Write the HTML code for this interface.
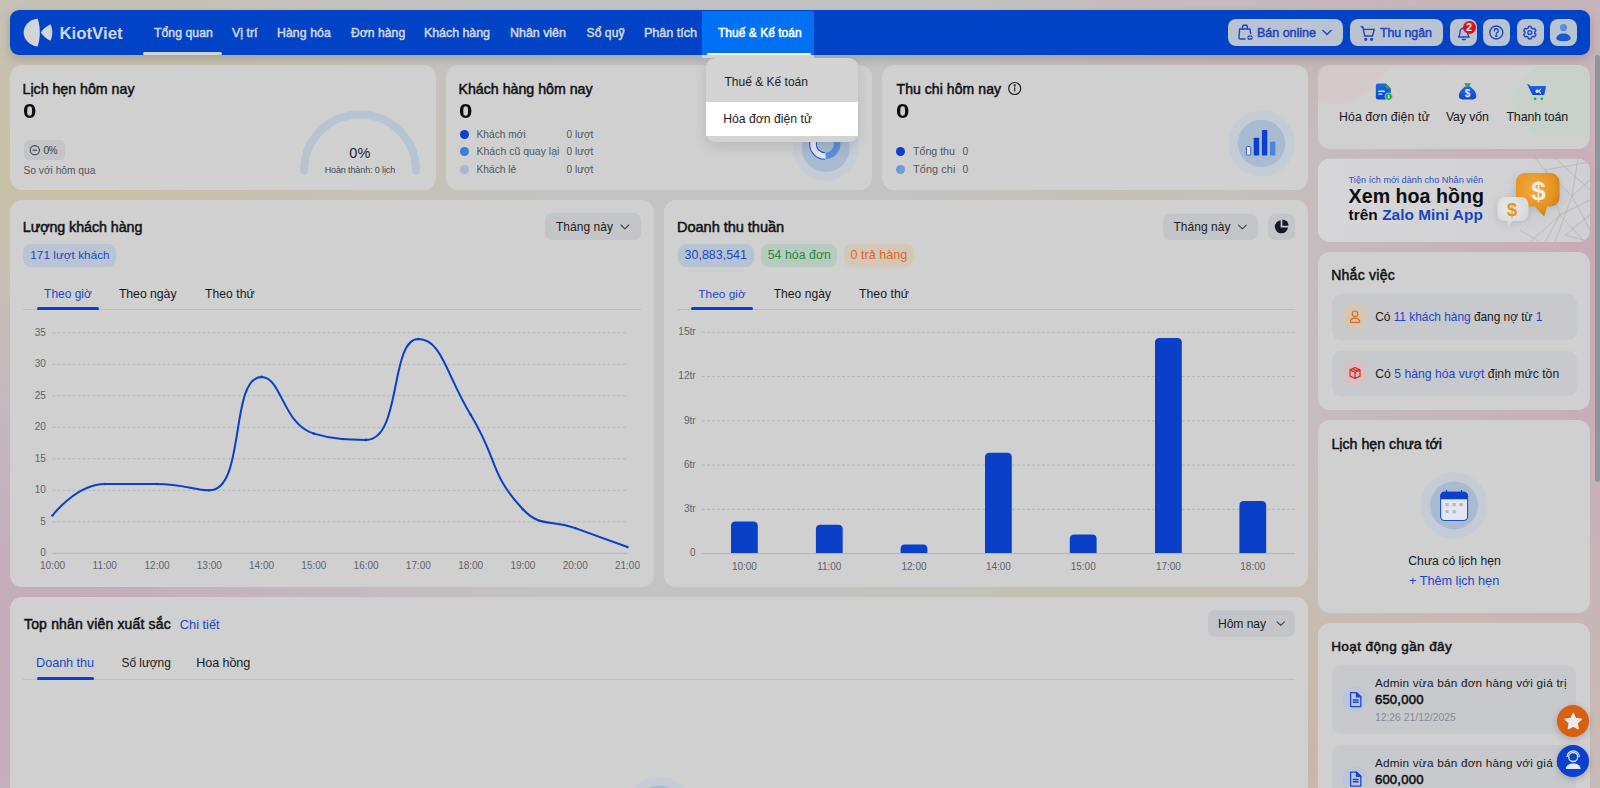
<!DOCTYPE html>
<html><head><meta charset="utf-8"><title>KiotViet</title>
<style>
html,body{margin:0;padding:0;width:1600px;height:788px;overflow:hidden;}
body{font-family:"Liberation Sans",sans-serif;background:#c3c3c3;}
#page{position:absolute;left:0;top:0;width:1600px;height:788px;overflow:hidden;
background:
 radial-gradient(ellipse 380px 110px at 1260px 40px, rgba(198,180,178,0.85), rgba(198,180,178,0) 100%),
 radial-gradient(ellipse 300px 200px at 1080px 600px, rgba(194,194,172,0.85), rgba(194,194,172,0) 100%),
 radial-gradient(ellipse 240px 130px at 1120px 195px, rgba(198,190,172,0.7), rgba(198,190,172,0) 100%),
 radial-gradient(ellipse 430px 320px at 1320px 760px, rgba(204,182,166,0.95), rgba(204,182,166,0) 100%),
 radial-gradient(ellipse 420px 650px at 1620px 300px, rgba(202,168,180,0.98), rgba(202,168,180,0) 100%),
 radial-gradient(ellipse 520px 440px at 40px 660px, rgba(198,168,186,1), rgba(198,168,186,0) 100%),
 radial-gradient(ellipse 520px 270px at 80px 160px, rgba(202,190,160,0.95), rgba(202,190,160,0) 100%),
 #c3c3c4;}
.t{position:absolute;white-space:nowrap;line-height:1;}
.r{position:absolute;}
.card{position:absolute;background:#d2d2d2;border-radius:12px;}
svg{position:absolute;overflow:visible;}

</style></head><body><div id="page">
<div class="r" style="left:10.00px;top:65.00px;width:426.00px;height:124.60px;background:#d0d0d0;border-radius:12px;"></div>
<div class="r" style="left:446.00px;top:65.00px;width:426.00px;height:124.60px;background:#d0d0d0;border-radius:12px;"></div>
<div class="r" style="left:882.00px;top:65.00px;width:426.00px;height:124.60px;background:#d0d0d0;border-radius:12px;"></div>
<div class="r" style="left:10.00px;top:200.00px;width:644.00px;height:387.00px;background:#d0d0d0;border-radius:12px;"></div>
<div class="r" style="left:664.00px;top:200.00px;width:644.00px;height:387.00px;background:#d0d0d0;border-radius:12px;"></div>
<div class="r" style="left:10.00px;top:597.00px;width:1298.00px;height:303.00px;background:#d0d0d0;border-radius:12px;"></div>
<div class="r" style="left:1318.00px;top:65.00px;width:272.00px;height:83.50px;background:#d0d0d0;border-radius:12px;"></div>
<div class="r" style="left:1318.00px;top:158.50px;width:272.00px;height:83.30px;background:#d0d0d0;border-radius:12px;"></div>
<div class="r" style="left:1318.00px;top:252.00px;width:272.00px;height:157.60px;background:#d0d0d0;border-radius:12px;"></div>
<div class="r" style="left:1318.00px;top:420.00px;width:272.00px;height:192.60px;background:#d0d0d0;border-radius:12px;"></div>
<div class="r" style="left:1318.00px;top:623.00px;width:272.00px;height:277.00px;background:#d0d0d0;border-radius:12px;"></div>
<div class="r" style="left:10.00px;top:10.00px;width:1580.00px;height:45.00px;background:#0043c7;border-radius:9px;box-shadow:0 4px 10px rgba(0,0,0,0.16);"></div>
<svg style="left:0;top:0" width="1600" height="60">
<path d="M37.6 18.4 C29 19.5 23.6 26 23.6 32.5 C23.6 39 29 45.5 37.6 46.6 C39.2 42 39.8 37 39.8 32.5 C39.8 28 39.2 23 37.6 18.4 Z" fill="#d4d5da"/>
<path d="M50.5 24.2 C51.8 27 52.3 29.8 52.3 32.5 C52.3 35.2 51.8 38 50.5 40.8 C46.5 38.8 43 36 40.8 32.5 C43 29 46.5 26.2 50.5 24.2 Z" fill="#d4d5da"/>
</svg>
<span id="t0" class="t" style="left:59.40px;top:25.60px;font-size:16.87px;color:#d2d5dd;font-weight:700;letter-spacing:-0.025px;">KiotViet</span>
<span id="t1" class="t" style="left:154.00px;top:27.01px;font-size:12.19px;color:#d2d5dd;font-weight:400;-webkit-text-stroke-width:0.5px;letter-spacing:0.063px;">Tổng quan</span>
<span id="t2" class="t" style="left:232.00px;top:27.01px;font-size:12.48px;color:#d2d5dd;font-weight:400;-webkit-text-stroke-width:0.5px;letter-spacing:-0.033px;">Vị trí</span>
<span id="t3" class="t" style="left:277.00px;top:27.00px;font-size:12.29px;color:#d2d5dd;font-weight:400;-webkit-text-stroke-width:0.5px;letter-spacing:0.081px;">Hàng hóa</span>
<span id="t4" class="t" style="left:351.00px;top:27.01px;font-size:12.10px;color:#d2d5dd;font-weight:400;-webkit-text-stroke-width:0.5px;letter-spacing:0.067px;">Đơn hàng</span>
<span id="t5" class="t" style="left:424.00px;top:27.01px;font-size:12.41px;color:#d2d5dd;font-weight:400;-webkit-text-stroke-width:0.5px;letter-spacing:-0.036px;">Khách hàng</span>
<span id="t6" class="t" style="left:510.00px;top:27.02px;font-size:12.49px;color:#d2d5dd;font-weight:400;-webkit-text-stroke-width:0.5px;letter-spacing:-0.034px;">Nhân viên</span>
<span id="t7" class="t" style="left:586.60px;top:27.00px;font-size:12.01px;color:#d2d5dd;font-weight:400;-webkit-text-stroke-width:0.5px;letter-spacing:0.088px;">Sổ quỹ</span>
<span id="t8" class="t" style="left:644.00px;top:27.00px;font-size:12.60px;color:#d2d5dd;font-weight:400;-webkit-text-stroke-width:0.5px;letter-spacing:-0.026px;">Phân tích</span>
<div class="r" style="left:143.00px;top:52.20px;width:79.00px;height:2.80px;background:#d0d3da;border-radius:2px;"></div>
<div class="r" style="left:702.40px;top:10.80px;width:111.40px;height:44.20px;background:#0070f4;border-radius:0px;"></div>
<div class="r" style="left:702.40px;top:55.00px;width:111.40px;height:3.40px;background:#d8d8d9;border-radius:0px;"></div>
<div class="r" style="left:707.00px;top:52.50px;width:104.00px;height:2.50px;background:#ffffff;border-radius:2px;"></div>
<span id="t9" class="t" style="left:718.00px;top:27.01px;font-size:11.99px;color:#ffffff;font-weight:400;-webkit-text-stroke-width:0.5px;letter-spacing:0.029px;">Thuế &amp; Kế toán</span>
<div class="r" style="left:1228.00px;top:19.00px;width:115.00px;height:27.00px;background:#bac3d1;border-radius:8px;"></div>
<div class="r" style="left:1350.00px;top:19.00px;width:93.00px;height:27.00px;background:#bac3d1;border-radius:8px;"></div>
<div class="r" style="left:1450.00px;top:19.00px;width:27.00px;height:27.00px;background:#bac3d1;border-radius:8px;"></div>
<div class="r" style="left:1483.00px;top:19.00px;width:27.00px;height:27.00px;background:#bac3d1;border-radius:8px;"></div>
<div class="r" style="left:1516.50px;top:19.00px;width:27.00px;height:27.00px;background:#bac3d1;border-radius:8px;"></div>
<div class="r" style="left:1550.00px;top:19.00px;width:27.00px;height:27.00px;background:#bac3d1;border-radius:8px;"></div>
<span id="t10" class="t" style="left:1257.00px;top:27.01px;font-size:12.54px;color:#1f45c4;font-weight:400;-webkit-text-stroke-width:0.5px;letter-spacing:-0.028px;">Bán online</span>
<span id="t11" class="t" style="left:1380.00px;top:27.01px;font-size:12.37px;color:#1f45c4;font-weight:400;-webkit-text-stroke-width:0.5px;letter-spacing:-0.050px;">Thu ngân</span>
<svg style="left:0;top:0" width="1600" height="60" fill="none" stroke="#1f45c4" stroke-width="1.4" stroke-linecap="round" stroke-linejoin="round">
<!-- bag icon -->
<path d="M1240 29 h10 l0.6 4.5 M1239.6 29 l-0.6 9 a1 1 0 0 0 1 1 h5"/>
<path d="M1242.5 29 v-1.5 a2.5 2.5 0 0 1 5 0 v1.5"/>
<circle cx="1250" cy="37.5" r="2.6" fill="#1f45c4" stroke="none"/>
<path d="M1250 35.6 v3.8 M1248.2 37.5 h3.6" stroke="#bac3d1" stroke-width="0.8"/>
<!-- chevron -->
<path d="M1323 30.5 l4 4 l4 -4"/>
<!-- cart -->
<path d="M1361.2 26.8 h1.6 l1.9 9.2 h7.8 l1.7 -6.6 h-10.3"/>
<circle cx="1365.8" cy="39.3" r="0.9" fill="#1f45c4"/>
<circle cx="1371.6" cy="39.3" r="0.9" fill="#1f45c4"/>
<!-- bell -->
<path d="M1458.5 37 c1.2-1.2 1.5-2.5 1.5-5 a3.8 3.8 0 0 1 7.6 0 c0 2.5 0.3 3.8 1.5 5 z"/>
<path d="M1462.3 39.5 h3"/>
<!-- help -->
<circle cx="1496.3" cy="32.5" r="6.5"/>
<path d="M1494.3 30.8 a2 2 0 1 1 2.8 1.8 c-0.6 0.3 -0.8 0.7 -0.8 1.4"/>
<circle cx="1496.3" cy="35.9" r="0.5" fill="#1f45c4"/>
<!-- settings -->
<circle cx="1529.8" cy="32.5" r="1.9"/>
<path d="M1528.5 26.5 h2.6 l0.45 1.6 l1.4 0.8 l1.6 -0.45 l1.3 2.25 l-1.15 1.15 v1.6 l1.15 1.15 l-1.3 2.25 l-1.6 -0.45 l-1.4 0.8 l-0.45 1.6 h-2.6 l-0.45 -1.6 l-1.4 -0.8 l-1.6 0.45 l-1.3 -2.25 l1.15 -1.15 v-1.6 l-1.15 -1.15 l1.3 -2.25 l1.6 0.45 l1.4 -0.8 z"/>
</svg>
<svg style="left:0;top:0" width="1600" height="60">
<circle cx="1563.5" cy="27.6" r="3.6" fill="#5a90dc"/>
<path d="M1556.3 38.6 c0 -3.2 3.2 -5.2 7.2 -5.2 s7.2 2 7.2 5.2 c0 1.6 -3.2 2.6 -7.2 2.6 s-7.2 -1 -7.2 -2.6z" fill="#1a5ad0"/>
</svg>
<div class="r" style="left:1462.5px;top:20.5px;width:13px;height:13px;border-radius:50%;background:#d8141b;"></div>
<span id="t12" class="t" style="left:1466.30px;top:22.61px;font-size:10.14px;color:#ffffff;font-weight:700;">2</span>
<span id="t13" class="t" style="left:22.50px;top:81.60px;font-size:14.20px;color:#111216;font-weight:400;-webkit-text-stroke-width:0.5px;letter-spacing:-0.000px;">Lịch hẹn hôm nay</span>
<span id="t14" class="t" style="left:23.20px;top:101.10px;font-size:20.60px;color:#0b0c10;font-weight:700;transform:scaleX(1.17);transform-origin:left top;">0</span>
<div class="r" style="left:23.50px;top:140.40px;width:41.20px;height:19.60px;background:#c4c5c8;border-radius:5px;"></div>
<svg style="left:0;top:0" width="500" height="200" fill="none" stroke="#3a4350" stroke-width="1.1">
<circle cx="34.8" cy="150.2" r="4.6"/><path d="M32.6 150.2 h4.4"/>
</svg>
<span id="t15" class="t" style="left:43.50px;top:146.21px;font-size:10.30px;color:#3a4350;font-weight:400;letter-spacing:-0.627px;">0%</span>
<span id="t16" class="t" style="left:23.50px;top:165.71px;font-size:10.21px;color:#50565e;font-weight:400;letter-spacing:-0.003px;">So với hôm qua</span>
<svg style="left:0;top:0" width="500" height="200">
<path d="M304 170.5 A56 56 0 0 1 416 170.5" fill="none" stroke="#b8c4d3" stroke-width="8" stroke-linecap="round"/>
</svg>
<span id="t17" class="t" style="left:349.30px;top:145.72px;font-size:14.50px;color:#1c2738;font-weight:400;letter-spacing:0.036px;">0%</span>
<span id="t18" class="t" style="left:324.70px;top:165.50px;font-size:9.00px;color:#3d4756;font-weight:400;letter-spacing:-0.120px;">Hoàn thành: 0 lịch</span>
<span id="t19" class="t" style="left:458.50px;top:81.60px;font-size:14.20px;color:#111216;font-weight:400;-webkit-text-stroke-width:0.5px;letter-spacing:0.000px;">Khách hàng hôm nay</span>
<span id="t20" class="t" style="left:459.20px;top:101.10px;font-size:20.60px;color:#0b0c10;font-weight:700;transform:scaleX(1.17);transform-origin:left top;">0</span>
<div class="r" style="left:460.20px;top:129.80px;width:9px;height:9px;border-radius:50%;background:#0a3fd0"></div>
<span id="t21" class="t" style="left:476.50px;top:129.90px;font-size:10.21px;color:#50565e;font-weight:400;letter-spacing:-0.007px;">Khách mới</span>
<span id="t22" class="t" style="left:566.60px;top:129.90px;font-size:10.09px;color:#50565e;font-weight:400;letter-spacing:-0.020px;">0 lượt</span>
<div class="r" style="left:460.20px;top:147.30px;width:9px;height:9px;border-radius:50%;background:#3b7fd8"></div>
<span id="t23" class="t" style="left:476.50px;top:146.41px;font-size:10.50px;color:#50565e;font-weight:400;letter-spacing:-0.003px;">Khách cũ quay lại</span>
<span id="t24" class="t" style="left:566.60px;top:147.40px;font-size:10.09px;color:#50565e;font-weight:400;letter-spacing:-0.020px;">0 lượt</span>
<div class="r" style="left:460.20px;top:164.70px;width:9px;height:9px;border-radius:50%;background:#a6b8d3"></div>
<span id="t25" class="t" style="left:476.50px;top:164.80px;font-size:10.27px;color:#50565e;font-weight:400;letter-spacing:-0.020px;">Khách lẻ</span>
<span id="t26" class="t" style="left:566.60px;top:164.81px;font-size:10.09px;color:#50565e;font-weight:400;letter-spacing:-0.020px;">0 lượt</span>
<svg style="left:0;top:0" width="900" height="200">
<circle cx="825.8" cy="148" r="33" fill="#c5ccd5"/>
<circle cx="825.8" cy="148" r="24" fill="#a9bbd0"/>
<path d="M825 132 A12 12 0 0 0 825 156" fill="none" stroke="#1f4fcf" stroke-width="7.6"/>
<path d="M825 132 A12 12 0 0 0 825 156" fill="none" stroke="#e4e8ee" stroke-width="5.6"/>
<path d="M826 156 A12 12 0 0 0 836.3 139.9" fill="none" stroke="#5b8fd6" stroke-width="6.6"/>
<path d="M836.3 139.9 A12 12 0 0 0 833 135.5" fill="none" stroke="#0a3fd0" stroke-width="6.6"/>
</svg>
<span id="t27" class="t" style="left:896.50px;top:81.60px;font-size:14.03px;color:#111216;font-weight:400;-webkit-text-stroke-width:0.5px;letter-spacing:0.064px;">Thu chi hôm nay</span>
<svg style="left:0;top:0" width="1100" height="200" fill="none" stroke="#1c1f26" stroke-width="1.2">
<circle cx="1014.7" cy="88.5" r="6"/><path d="M1014.7 87.3 v4.2"/><circle cx="1014.7" cy="85.4" r="0.5" fill="#1c1f26"/>
</svg>
<span id="t28" class="t" style="left:896.20px;top:101.10px;font-size:20.60px;color:#0b0c10;font-weight:700;transform:scaleX(1.17);transform-origin:left top;">0</span>
<div class="r" style="left:896.30px;top:147.30px;width:9px;height:9px;border-radius:50%;background:#0a3fd0"></div>
<span id="t29" class="t" style="left:913.00px;top:146.42px;font-size:10.60px;color:#50565e;font-weight:400;letter-spacing:0.011px;">Tổng thu</span>
<span id="t30" class="t" style="left:962.40px;top:147.42px;font-size:10.43px;color:#50565e;font-weight:400;">0</span>
<div class="r" style="left:896.30px;top:164.70px;width:9px;height:9px;border-radius:50%;background:#6e9bd6"></div>
<span id="t31" class="t" style="left:913.00px;top:163.80px;font-size:10.85px;color:#50565e;font-weight:400;letter-spacing:0.117px;">Tổng chi</span>
<span id="t32" class="t" style="left:962.40px;top:164.81px;font-size:10.43px;color:#50565e;font-weight:400;">0</span>
<svg style="left:0;top:0" width="1400" height="200">
<circle cx="1261.5" cy="143.4" r="33.2" fill="#c5ccd5"/>
<circle cx="1261.5" cy="143.4" r="23.7" fill="#a9bbd0"/>
<rect x="1246.4" y="146.6" width="4.4" height="8.6" rx="0.8" fill="#e6e9ee" stroke="#1f4fcf" stroke-width="0.9"/>
<rect x="1253.7" y="137.8" width="5.5" height="17.7" rx="0.8" fill="#0a3fd0"/>
<rect x="1261.9" y="130" width="5.4" height="25.5" rx="0.8" fill="#0a3fd0"/>
<rect x="1270" y="141.8" width="5.4" height="13.7" rx="0.8" fill="#4a86d8"/>
</svg>
<span id="t33" class="t" style="left:22.80px;top:219.70px;font-size:14.28px;color:#111216;font-weight:400;-webkit-text-stroke-width:0.5px;letter-spacing:-0.060px;">Lượng khách hàng</span>
<div class="r" style="left:545.30px;top:213.40px;width:95.40px;height:26.30px;background:#c4c5c8;border-radius:7px;"></div>
<span id="t34" class="t" style="left:556.00px;top:222.21px;font-size:11.96px;color:#1b1d22;font-weight:400;letter-spacing:0.061px;">Tháng này</span>
<svg style="left:0;top:0" width="1600" height="788" fill="none" stroke="#3a414b" stroke-width="1.1" stroke-linecap="round" stroke-linejoin="round">
<path d="M621.00 225.00 l3.9 3.8 l3.9 -3.8"/></svg>
<div class="r" style="left:23.30px;top:243.50px;width:93.10px;height:23.10px;background:#b9c5d4;border-radius:8px;"></div>
<span id="t35" class="t" style="left:30.30px;top:249.31px;font-size:11.73px;color:#1a47c8;font-weight:400;letter-spacing:0.046px;">171 lượt khách</span>
<div class="r" style="left:23.30px;top:308.70px;width:617.40px;height:1.20px;background:#bcbdc0;border-radius:0px;"></div>
<div class="r" style="left:36.80px;top:307.40px;width:62.20px;height:2.60px;background:#0a3fd0;border-radius:1.5px;"></div>
<span id="t36" class="t" style="left:44.10px;top:288.50px;font-size:11.88px;color:#1a47c8;font-weight:400;letter-spacing:0.042px;">Theo giờ</span>
<span id="t37" class="t" style="left:118.90px;top:287.50px;font-size:12.28px;color:#16181d;font-weight:400;letter-spacing:-0.041px;">Theo ngày</span>
<span id="t38" class="t" style="left:205.00px;top:287.51px;font-size:12.14px;color:#16181d;font-weight:400;letter-spacing:0.069px;">Theo thứ</span>
<svg style="left:0;top:0" width="1600" height="788">
<line x1="52.5" y1="521.80" x2="627.5" y2="521.80" stroke="#b3b6ba" stroke-width="1" stroke-dasharray="3 2"/>
<line x1="52.5" y1="490.30" x2="627.5" y2="490.30" stroke="#b3b6ba" stroke-width="1" stroke-dasharray="3 2"/>
<line x1="52.5" y1="458.80" x2="627.5" y2="458.80" stroke="#b3b6ba" stroke-width="1" stroke-dasharray="3 2"/>
<line x1="52.5" y1="427.30" x2="627.5" y2="427.30" stroke="#b3b6ba" stroke-width="1" stroke-dasharray="3 2"/>
<line x1="52.5" y1="395.80" x2="627.5" y2="395.80" stroke="#b3b6ba" stroke-width="1" stroke-dasharray="3 2"/>
<line x1="52.5" y1="364.30" x2="627.5" y2="364.30" stroke="#b3b6ba" stroke-width="1" stroke-dasharray="3 2"/>
<line x1="52.5" y1="332.80" x2="627.5" y2="332.80" stroke="#b3b6ba" stroke-width="1" stroke-dasharray="3 2"/>
<line x1="52.5" y1="553.30" x2="627.5" y2="553.30" stroke="#afb3b8" stroke-width="1"/>
<path d="M52.50,515.50 C52.50,515.50 76.61,484.00 104.77,484.00 C128.88,484.00 131.00,484.00 157.04,484.00 C183.27,484.00 193.81,490.30 209.31,490.30 C246.08,490.30 229.27,376.90 261.58,376.90 C281.54,376.90 282.79,424.37 313.85,433.60 C335.06,439.90 349.56,439.90 366.12,439.90 C401.83,439.90 389.50,339.10 418.39,339.10 C441.77,339.10 446.63,375.60 470.66,414.70 C498.90,460.65 488.42,472.48 522.93,509.20 C540.69,528.10 549.07,518.65 575.20,528.10 C601.34,537.55 627.47,547.00 627.47,547.00" fill="none" stroke="#0a40c8" stroke-width="2"/>
<circle cx="52.50" cy="515.50" r="1.3" fill="#0a40c8"/>
<circle cx="104.77" cy="484.00" r="1.3" fill="#0a40c8"/>
<circle cx="157.04" cy="484.00" r="1.3" fill="#0a40c8"/>
<circle cx="209.31" cy="490.30" r="1.3" fill="#0a40c8"/>
<circle cx="261.58" cy="376.90" r="1.3" fill="#0a40c8"/>
<circle cx="313.85" cy="433.60" r="1.3" fill="#0a40c8"/>
<circle cx="366.12" cy="439.90" r="1.3" fill="#0a40c8"/>
<circle cx="418.39" cy="339.10" r="1.3" fill="#0a40c8"/>
<circle cx="470.66" cy="414.70" r="1.3" fill="#0a40c8"/>
<circle cx="522.93" cy="509.20" r="1.3" fill="#0a40c8"/>
<circle cx="575.20" cy="528.10" r="1.3" fill="#0a40c8"/>
<circle cx="627.47" cy="547.00" r="1.3" fill="#0a40c8"/>
</svg>
<span class="t" style="left:0;width:45.8px;text-align:right;top:548.10px;font-size:10px;color:#5c636c">0</span>
<span class="t" style="left:0;width:45.8px;text-align:right;top:516.60px;font-size:10px;color:#5c636c">5</span>
<span class="t" style="left:0;width:45.8px;text-align:right;top:485.10px;font-size:10px;color:#5c636c">10</span>
<span class="t" style="left:0;width:45.8px;text-align:right;top:453.60px;font-size:10px;color:#5c636c">15</span>
<span class="t" style="left:0;width:45.8px;text-align:right;top:422.10px;font-size:10px;color:#5c636c">20</span>
<span class="t" style="left:0;width:45.8px;text-align:right;top:390.60px;font-size:10px;color:#5c636c">25</span>
<span class="t" style="left:0;width:45.8px;text-align:right;top:359.10px;font-size:10px;color:#5c636c">30</span>
<span class="t" style="left:0;width:45.8px;text-align:right;top:327.60px;font-size:10px;color:#5c636c">35</span>
<span class="t" style="left:22.50px;width:60px;text-align:center;top:561.4px;font-size:10px;color:#5c636c">10:00</span>
<span class="t" style="left:74.77px;width:60px;text-align:center;top:561.4px;font-size:10px;color:#5c636c">11:00</span>
<span class="t" style="left:127.04px;width:60px;text-align:center;top:561.4px;font-size:10px;color:#5c636c">12:00</span>
<span class="t" style="left:179.31px;width:60px;text-align:center;top:561.4px;font-size:10px;color:#5c636c">13:00</span>
<span class="t" style="left:231.58px;width:60px;text-align:center;top:561.4px;font-size:10px;color:#5c636c">14:00</span>
<span class="t" style="left:283.85px;width:60px;text-align:center;top:561.4px;font-size:10px;color:#5c636c">15:00</span>
<span class="t" style="left:336.12px;width:60px;text-align:center;top:561.4px;font-size:10px;color:#5c636c">16:00</span>
<span class="t" style="left:388.39px;width:60px;text-align:center;top:561.4px;font-size:10px;color:#5c636c">17:00</span>
<span class="t" style="left:440.66px;width:60px;text-align:center;top:561.4px;font-size:10px;color:#5c636c">18:00</span>
<span class="t" style="left:492.93px;width:60px;text-align:center;top:561.4px;font-size:10px;color:#5c636c">19:00</span>
<span class="t" style="left:545.20px;width:60px;text-align:center;top:561.4px;font-size:10px;color:#5c636c">20:00</span>
<span class="t" style="left:597.47px;width:60px;text-align:center;top:561.4px;font-size:10px;color:#5c636c">21:00</span>
<span id="t39" class="t" style="left:677.00px;top:219.71px;font-size:14.60px;color:#111216;font-weight:400;-webkit-text-stroke-width:0.5px;letter-spacing:-0.057px;">Doanh thu thuần</span>
<div class="r" style="left:1163.00px;top:213.50px;width:94.80px;height:26.30px;background:#c4c5c8;border-radius:7px;"></div>
<span id="t40" class="t" style="left:1173.50px;top:222.32px;font-size:11.96px;color:#1b1d22;font-weight:400;letter-spacing:0.061px;">Tháng này</span>
<svg style="left:0;top:0" width="1600" height="788" fill="none" stroke="#3a414b" stroke-width="1.1" stroke-linecap="round" stroke-linejoin="round">
<path d="M1238.50 225.10 l3.9 3.8 l3.9 -3.8"/></svg>
<div class="r" style="left:1268.30px;top:213.50px;width:26.40px;height:26.30px;background:#c4c5c8;border-radius:7px;"></div>
<svg style="left:0;top:0" width="1600" height="788">
<path d="M1280.6 220.2 A6.6 6.6 0 1 0 1288 227.6 L1280.6 227.6 Z" fill="#111a26"/>
<path d="M1282.4 219.4 A6.4 6.4 0 0 1 1288.6 225.7 L1282.4 225.7 Z" fill="#111a26"/>
</svg>
<div class="r" style="left:677.50px;top:243.70px;width:76.10px;height:22.90px;background:#b7c3d3;border-radius:8px;"></div>
<span id="t41" class="t" style="left:684.60px;top:249.30px;font-size:12.46px;color:#1a47c8;font-weight:400;letter-spacing:-0.000px;">30,883,541</span>
<div class="r" style="left:761.00px;top:243.70px;width:76.00px;height:22.90px;background:#b7cbbf;border-radius:8px;"></div>
<span id="t42" class="t" style="left:767.70px;top:249.30px;font-size:12.20px;color:#1d8a3c;font-weight:400;letter-spacing:0.096px;">54 hóa đơn</span>
<div class="r" style="left:844.40px;top:243.70px;width:69.40px;height:22.90px;background:#d5c7b8;border-radius:8px;"></div>
<span id="t43" class="t" style="left:850.60px;top:249.32px;font-size:12.58px;color:#e0661c;font-weight:400;letter-spacing:0.006px;">0 trả hàng</span>
<div class="r" style="left:678.00px;top:308.70px;width:617.00px;height:1.20px;background:#bcbdc0;border-radius:0px;"></div>
<div class="r" style="left:690.80px;top:307.40px;width:62.20px;height:2.60px;background:#0a3fd0;border-radius:1.5px;"></div>
<span id="t44" class="t" style="left:698.30px;top:288.51px;font-size:11.83px;color:#1a47c8;font-weight:400;letter-spacing:0.035px;">Theo giờ</span>
<span id="t45" class="t" style="left:773.70px;top:287.51px;font-size:12.02px;color:#16181d;font-weight:400;letter-spacing:0.066px;">Theo ngày</span>
<span id="t46" class="t" style="left:859.00px;top:287.51px;font-size:12.19px;color:#16181d;font-weight:400;letter-spacing:0.067px;">Theo thứ</span>
<svg style="left:0;top:0" width="1600" height="788">
<line x1="702" y1="509.34" x2="1295" y2="509.34" stroke="#b3b6ba" stroke-width="1" stroke-dasharray="3 2"/>
<line x1="702" y1="465.08" x2="1295" y2="465.08" stroke="#b3b6ba" stroke-width="1" stroke-dasharray="3 2"/>
<line x1="702" y1="420.82" x2="1295" y2="420.82" stroke="#b3b6ba" stroke-width="1" stroke-dasharray="3 2"/>
<line x1="702" y1="376.56" x2="1295" y2="376.56" stroke="#b3b6ba" stroke-width="1" stroke-dasharray="3 2"/>
<line x1="702" y1="332.30" x2="1295" y2="332.30" stroke="#b3b6ba" stroke-width="1" stroke-dasharray="3 2"/>
<line x1="702" y1="553.60" x2="1295" y2="553.60" stroke="#afb3b8" stroke-width="1"/>
<path d="M731.00 553.10 V526.10 Q731.00 521.60 735.50 521.60 H753.30 Q757.80 521.60 757.80 526.10 V553.10 Z" fill="#0a40c8"/>
<path d="M815.90 553.10 V529.30 Q815.90 524.80 820.40 524.80 H838.20 Q842.70 524.80 842.70 529.30 V553.10 Z" fill="#0a40c8"/>
<path d="M900.60 553.10 V548.80 Q900.60 544.50 904.90 544.50 H923.10 Q927.40 544.50 927.40 548.80 V553.10 Z" fill="#0a40c8"/>
<path d="M985.00 553.10 V457.20 Q985.00 452.70 989.50 452.70 H1007.30 Q1011.80 452.70 1011.80 457.20 V553.10 Z" fill="#0a40c8"/>
<path d="M1069.80 553.10 V539.00 Q1069.80 534.50 1074.30 534.50 H1092.10 Q1096.60 534.50 1096.60 539.00 V553.10 Z" fill="#0a40c8"/>
<path d="M1155.00 553.10 V342.50 Q1155.00 338.00 1159.50 338.00 H1177.30 Q1181.80 338.00 1181.80 342.50 V553.10 Z" fill="#0a40c8"/>
<path d="M1239.40 553.10 V505.40 Q1239.40 500.90 1243.90 500.90 H1261.70 Q1266.20 500.90 1266.20 505.40 V553.10 Z" fill="#0a40c8"/>
</svg>
<span class="t" style="left:600px;width:95.6px;text-align:right;top:548.30px;font-size:10px;color:#5c636c">0</span>
<span class="t" style="left:600px;width:95.6px;text-align:right;top:504.04px;font-size:10px;color:#5c636c">3tr</span>
<span class="t" style="left:600px;width:95.6px;text-align:right;top:459.78px;font-size:10px;color:#5c636c">6tr</span>
<span class="t" style="left:600px;width:95.6px;text-align:right;top:415.52px;font-size:10px;color:#5c636c">9tr</span>
<span class="t" style="left:600px;width:95.6px;text-align:right;top:371.26px;font-size:10px;color:#5c636c">12tr</span>
<span class="t" style="left:600px;width:95.6px;text-align:right;top:327.00px;font-size:10px;color:#5c636c">15tr</span>
<span class="t" style="left:714.40px;width:60px;text-align:center;top:561.8px;font-size:10px;color:#5c636c">10:00</span>
<span class="t" style="left:799.30px;width:60px;text-align:center;top:561.8px;font-size:10px;color:#5c636c">11:00</span>
<span class="t" style="left:884.00px;width:60px;text-align:center;top:561.8px;font-size:10px;color:#5c636c">12:00</span>
<span class="t" style="left:968.40px;width:60px;text-align:center;top:561.8px;font-size:10px;color:#5c636c">14:00</span>
<span class="t" style="left:1053.20px;width:60px;text-align:center;top:561.8px;font-size:10px;color:#5c636c">15:00</span>
<span class="t" style="left:1138.40px;width:60px;text-align:center;top:561.8px;font-size:10px;color:#5c636c">17:00</span>
<span class="t" style="left:1222.80px;width:60px;text-align:center;top:561.8px;font-size:10px;color:#5c636c">18:00</span>
<span id="t47" class="t" style="left:24.00px;top:616.51px;font-size:14.02px;color:#111216;font-weight:400;-webkit-text-stroke-width:0.5px;letter-spacing:0.159px;">Top nhân viên xuất sắc</span>
<span id="t48" class="t" style="left:179.80px;top:618.51px;font-size:12.79px;color:#1a47c8;font-weight:400;letter-spacing:-0.004px;">Chi tiết</span>
<div class="r" style="left:1208.30px;top:610.00px;width:86.70px;height:26.90px;background:#c4c5c8;border-radius:7px;"></div>
<span id="t49" class="t" style="left:1218.00px;top:618.21px;font-size:12.11px;color:#1b1d22;font-weight:400;letter-spacing:-0.067px;">Hôm nay</span>
<svg style="left:0;top:0" width="1600" height="788" fill="none" stroke="#3a414b" stroke-width="1.1" stroke-linecap="round" stroke-linejoin="round">
<path d="M1277 621.8 l3.7 3.6 l3.7 -3.6"/></svg>
<div class="r" style="left:23.00px;top:678.80px;width:1272.00px;height:1.20px;background:#bcbdc0;border-radius:0px;"></div>
<div class="r" style="left:37.00px;top:677.40px;width:57.00px;height:2.60px;background:#0a3fd0;border-radius:1.5px;"></div>
<span id="t50" class="t" style="left:36.10px;top:657.01px;font-size:12.66px;color:#1a47c8;font-weight:400;letter-spacing:-0.058px;">Doanh thu</span>
<span id="t51" class="t" style="left:121.50px;top:658.02px;font-size:11.90px;color:#16181d;font-weight:400;letter-spacing:-0.023px;">Số lượng</span>
<span id="t52" class="t" style="left:196.30px;top:657.00px;font-size:12.64px;color:#16181d;font-weight:400;letter-spacing:-0.119px;">Hoa hồng</span>
<svg style="left:0;top:0" width="1600" height="900">
<circle cx="659.3" cy="809.4" r="33" fill="#c5ccd5"/>
<circle cx="659.3" cy="809.4" r="24" fill="#a9bbd0"/>
</svg>
<svg style="left:0;top:0" width="1600" height="788">
<defs><clipPath id="qlc"><rect x="1318" y="65" width="272" height="83.5" rx="12"/></clipPath></defs>
<g clip-path="url(#qlc)">
<path d="M1318 65 H1391.7 C1378 84 1362 104.5 1337 104.5 C1328 104.5 1321 102.5 1318 100.5 Z" fill="#d5c9cb"/>
<path d="M1537 65 H1590 V138 H1537 C1530 131 1512 112 1511 101 C1511 93 1528 74 1537 65 Z" fill="#c9d2ca"/>
</g></svg>
<svg style="left:0;top:0" width="1600" height="788">
<!-- invoice icon -->
<defs><linearGradient id="icb" x1="0" y1="0" x2="0" y2="1"><stop offset="0" stop-color="#1f6ae6"/><stop offset="1" stop-color="#0a47d4"/></linearGradient></defs>
<path d="M1378 83.5 h7.8 l5 5 v8.7 a2.2 2.2 0 0 1 -2.2 2.2 h-10.6 a2.2 2.2 0 0 1 -2.2 -2.2 v-11.5 a2.2 2.2 0 0 1 2.2 -2.2z" fill="url(#icb)"/>
<path d="M1385.8 83.5 v5 h5z" fill="#22a83e"/>
<rect x="1378.2" y="90.6" width="6.8" height="1.4" rx="0.7" fill="#dfe6f5"/><rect x="1378.2" y="93.4" width="4.2" height="1.4" rx="0.7" fill="#dfe6f5"/>
<circle cx="1388.7" cy="96.6" r="3.7" fill="#22a83e" stroke="#d0d0d0" stroke-width="0.7"/>
<rect x="1387.8" y="94.8" width="1.8" height="3.6" fill="#bfe5c8"/>
<!-- money bag -->
<path d="M1464.3 83.3 h6.6 l-1.5 2.8 h-3.6z" fill="#22a83e"/>
<path d="M1465.6 86.3 h4 c3.8 2.6 6.8 6.3 6.8 9.8 c0 2.4 -1.5 3.3 -3.6 3.3 h-10.4 c-2.1 0 -3.6 -0.9 -3.6 -3.3 c0 -3.5 3 -7.2 6.8 -9.8z" fill="url(#icb)"/>
<text x="1467.6" y="96.8" font-family="Liberation Sans" font-size="10" font-weight="700" fill="#e6ecf8" text-anchor="middle">$</text>
<!-- cart -->
<path d="M1527 84 c1.6 0 2.6 0.8 3.4 2 h14.5 c0.8 0 1.2 0.6 1 1.4 l-1.4 6.4 c-0.2 0.8 -0.8 1.3 -1.6 1.3 h-10.4 z" fill="url(#icb)"/>
<circle cx="1535.2" cy="98.7" r="1.3" fill="#22a83e"/><circle cx="1541.8" cy="98.7" r="1.3" fill="#22a83e"/>
<circle cx="1537.2" cy="91.2" r="1.8" fill="#dfe6f5"/>
<path d="M1541 88.8 l-2.2 2.4 l2.2 2.4" fill="none" stroke="#dfe6f5" stroke-width="1.1"/>
</svg>
<span id="t53" class="t" style="left:1339.00px;top:110.82px;font-size:12.29px;color:#16181d;font-weight:400;letter-spacing:0.092px;">Hóa đơn điện tử</span>
<span id="t54" class="t" style="left:1445.90px;top:110.81px;font-size:12.34px;color:#16181d;font-weight:400;letter-spacing:-0.129px;">Vay vốn</span>
<span id="t55" class="t" style="left:1506.40px;top:110.81px;font-size:12.36px;color:#16181d;font-weight:400;letter-spacing:-0.084px;">Thanh toán</span>
<svg style="left:0;top:0" width="1600" height="788">
<defs>
<clipPath id="bnc"><rect x="1318" y="158.5" width="272" height="83.3" rx="12"/></clipPath>
<linearGradient id="bng" x1="0" y1="0" x2="1" y2="0"><stop offset="0" stop-color="#d6d6d8"/><stop offset="0.6" stop-color="#d3d3d5"/><stop offset="1" stop-color="#d0d0d3"/></linearGradient>
<radialGradient id="og" cx="0.4" cy="0.35" r="0.7"><stop offset="0" stop-color="#f2ab3c"/><stop offset="0.7" stop-color="#e59320"/><stop offset="1" stop-color="#d07a12"/></radialGradient>
<radialGradient id="wg" cx="0.4" cy="0.35" r="0.75"><stop offset="0" stop-color="#e9e9eb"/><stop offset="0.8" stop-color="#d9d9dc"/><stop offset="1" stop-color="#c4c5ca"/></radialGradient>
<filter id="bsh" x="-50%" y="-50%" width="200%" height="200%"><feGaussianBlur stdDeviation="4"/></filter>
</defs>
<g clip-path="url(#bnc)">
<rect x="1318" y="158.5" width="272" height="83.3" fill="url(#bng)"/>
<g fill="none" stroke="#acadb1" stroke-width="0.6">
<path d="M1535 158 L1545 170 L1590 162 M1545 170 L1572 196 L1590 180 M1572 196 L1590 230 M1545 170 L1560 215 L1590 200 M1560 215 L1545 242 M1560 215 L1585 242 M1572 196 L1555 242 M1530 242 L1560 215 M1578 158 L1572 196 M1590 215 L1565 235 L1590 242 M1520 230 L1540 242 M1555 158 L1590 190"/>
</g>
<path d="M1524 176 h27 a9 9 0 0 1 9 9 v14 a9 9 0 0 1 -9 9 h-4.5 l-3 9 l-8 -9 h-11.5 a9 9 0 0 1 -9 -9 v-14 a9 9 0 0 1 9 -9z" fill="#9aa3b8" opacity="0.55" filter="url(#bsh)"/>
<path d="M1504 199 h19 a7 7 0 0 1 7 7 v9 a7 7 0 0 1 -7 7 h-10 l-5 5 l-1 -5 h-3 a7 7 0 0 1 -7 -7 v-9 a7 7 0 0 1 7 -7z" fill="#9aa3b8" opacity="0.5" filter="url(#bsh)"/>
<path d="M1525 173 h25.5 a9 9 0 0 1 9 9 v15.5 a9 9 0 0 1 -9 9 h-3.5 l-2.8 10 l-9.5 -10 h-9.7 a9 9 0 0 1 -9 -9 v-15.5 a9 9 0 0 1 9 -9z" fill="url(#og)"/>
<text x="1538.6" y="199.5" font-family="Liberation Sans" font-size="26" font-weight="700" fill="#f3ece4" text-anchor="middle">$</text>
<path d="M1504.6 197 h16.8 a7 7 0 0 1 7 7 v10 a7 7 0 0 1 -7 7 h-9 l-4.6 6.2 l-0.3 -6.2 h-2.9 a7 7 0 0 1 -7 -7 v-10 a7 7 0 0 1 7 -7z" fill="url(#wg)"/>
<text x="1512" y="215.8" font-family="Liberation Sans" font-size="19" font-weight="700" fill="#e29a1c" text-anchor="middle">$</text>
</g>
</svg>
<span id="t56" class="t" style="left:1348.60px;top:176.00px;font-size:9.15px;color:#2a4fc0;font-weight:400;letter-spacing:0.017px;">Tiện ích mới dành cho Nhân viên</span>
<span id="t57" class="t" style="left:1348.60px;top:186.60px;font-size:19.62px;color:#0b0c10;font-weight:700;letter-spacing:0.026px;">Xem hoa hồng</span>
<span id="t58" class="t" style="left:1348.60px;top:207.00px;font-size:15.38px;color:#0b0c10;font-weight:700;letter-spacing:0.041px;">trên <span style="color:#1a45c0">Zalo Mini App</span></span>
<span id="t59" class="t" style="left:1331.20px;top:268.01px;font-size:14.02px;color:#111216;font-weight:400;-webkit-text-stroke-width:0.5px;letter-spacing:0.246px;">Nhắc việc</span>
<div class="r" style="left:1331.80px;top:294.00px;width:244.80px;height:45.60px;background:#c8c9cc;border-radius:9px;"></div>
<div class="r" style="left:1331.80px;top:350.80px;width:244.80px;height:45.60px;background:#c8c9cc;border-radius:9px;"></div>
<div class="r" style="left:1341.8px;top:303.3px;width:26.4px;height:26.4px;border-radius:50%;background:#d5c6b6"></div>
<div class="r" style="left:1341.8px;top:360.1px;width:26.4px;height:26.4px;border-radius:50%;background:#d6c2c4"></div>
<svg style="left:0;top:0" width="1600" height="788" fill="none" stroke-linecap="round" stroke-linejoin="round">
<circle cx="1355" cy="313.8" r="2.8" stroke="#e0691a" stroke-width="1.2"/>
<path d="M1350.3 322.3 c0 -2.8 2.1 -4.2 4.7 -4.2 s4.7 1.4 4.7 4.2 z" stroke="#e0691a" stroke-width="1.2"/>
<path d="M1355 367.5 l5 2.4 v6.2 l-5 2.4 l-5 -2.4 v-6.2 z M1350 369.9 l5 2.4 l5 -2.4 M1355 372.3 v6.2 M1352.5 368.7 l5 2.4" stroke="#d9241f" stroke-width="1.2"/>
</svg>
<span id="t60" class="t" style="left:1375.20px;top:312.01px;font-size:11.90px;color:#16181d;font-weight:400;letter-spacing:-0.013px;">Có <span style="color:#1a47c8">11 khách hàng</span> đang nợ từ <span style="color:#1a47c8">1</span></span>
<span id="t61" class="t" style="left:1375.20px;top:367.81px;font-size:12.17px;color:#16181d;font-weight:400;letter-spacing:0.030px;">Có <span style="color:#1a47c8">5 hàng hóa vượt</span> định mức tồn</span>
<span id="t62" class="t" style="left:1331.40px;top:437.01px;font-size:14.23px;color:#111216;font-weight:400;-webkit-text-stroke-width:0.5px;letter-spacing:0.001px;">Lịch hẹn chưa tới</span>
<svg style="left:0;top:0" width="1600" height="788">
<circle cx="1454.1" cy="505.4" r="33.4" fill="#c5ccd5"/>
<circle cx="1454.1" cy="505.4" r="24" fill="#a9bbd0"/>
<rect x="1440.6" y="492" width="27" height="28.5" rx="4" fill="#e4e8ee" stroke="#1f4fcf" stroke-width="1.1"/>
<path d="M1440.6 496 a4 4 0 0 1 4 -4 h19 a4 4 0 0 1 4 4 v3.2 h-27z" fill="#0a3fd0"/>
<path d="M1446.5 490 v3.5 M1461.5 490 v3.5" stroke="#0a3fd0" stroke-width="1.2"/>
<rect x="1445.5" y="503" width="3.2" height="3.2" fill="#a9bbd0"/><rect x="1452.5" y="503" width="3.2" height="3.2" fill="#a9bbd0"/><rect x="1459.5" y="503" width="3.2" height="3.2" fill="#a9bbd0"/>
<rect x="1445.5" y="510" width="3.2" height="3.2" fill="#a9bbd0"/><rect x="1452.5" y="510" width="3.2" height="3.2" fill="#a9bbd0"/>
</svg>
<span id="t63" class="t" style="left:1408.30px;top:554.80px;font-size:12.18px;color:#16181d;font-weight:400;letter-spacing:0.028px;">Chưa có lịch hẹn</span>
<span id="t64" class="t" style="left:1409.00px;top:574.60px;font-size:12.72px;color:#1a47c8;font-weight:400;letter-spacing:-0.027px;">+ Thêm lịch hẹn</span>
<span id="t65" class="t" style="left:1331.20px;top:639.82px;font-size:13.57px;color:#111216;font-weight:400;-webkit-text-stroke-width:0.5px;letter-spacing:0.373px;">Hoạt động gần đây</span>
<div class="r" style="left:1332.20px;top:664.90px;width:244.30px;height:69.50px;background:#c8c9cc;border-radius:9px;"></div>
<div class="r" style="left:1332.20px;top:744.80px;width:244.30px;height:85.20px;background:#c8c9cc;border-radius:9px;"></div>
<div class="r" style="left:1342px;top:686.40px;width:26px;height:26px;border-radius:50%;background:#bcc7d5"></div>
<svg style="left:0;top:0" width="1600" height="900" fill="none" stroke="#1a45d0" stroke-width="1.3" stroke-linejoin="round">
<path d="M1350.6 692.60 h6 l4.2 4.2 v9.8 h-10.2 z"/><path d="M1356.4 692.60 v4.2 h4.2z" fill="#1a45d0"/><path d="M1352.8 700.00 h5.8 M1352.8 702.20 h5.8" stroke-width="1.4"/></svg>
<div class="r" style="left:1342px;top:765.90px;width:26px;height:26px;border-radius:50%;background:#bcc7d5"></div>
<svg style="left:0;top:0" width="1600" height="900" fill="none" stroke="#1a45d0" stroke-width="1.3" stroke-linejoin="round">
<path d="M1350.6 772.10 h6 l4.2 4.2 v9.8 h-10.2 z"/><path d="M1356.4 772.10 v4.2 h4.2z" fill="#1a45d0"/><path d="M1352.8 779.50 h5.8 M1352.8 781.70 h5.8" stroke-width="1.4"/></svg>
<span id="t66" class="t" style="left:1374.90px;top:676.80px;font-size:11.76px;color:#16181d;font-weight:400;letter-spacing:0.215px;">Admin vừa bán đơn hàng với giá trị</span>
<span id="t67" class="t" style="left:1374.90px;top:692.51px;font-size:13.11px;color:#0b0c10;font-weight:400;-webkit-text-stroke-width:0.5px;letter-spacing:0.201px;">650,000</span>
<span id="t68" class="t" style="left:1374.90px;top:713.00px;font-size:10.45px;color:#878c94;font-weight:400;letter-spacing:-0.024px;">12:26 21/12/2025</span>
<span id="t69" class="t" style="left:1374.90px;top:756.80px;font-size:11.76px;color:#16181d;font-weight:400;letter-spacing:0.215px;">Admin vừa bán đơn hàng với giá trị</span>
<span id="t70" class="t" style="left:1374.90px;top:772.51px;font-size:13.11px;color:#0b0c10;font-weight:400;-webkit-text-stroke-width:0.5px;letter-spacing:0.201px;">600,000</span>
<div class="r" style="left:1556.9px;top:704.7px;width:32.6px;height:32.6px;border-radius:50%;background:#d9600e;box-shadow:0 2px 6px rgba(0,0,0,0.2)"></div>
<div class="r" style="left:1556.9px;top:744.7px;width:32.6px;height:32.6px;border-radius:50%;background:#0a3fd0;box-shadow:0 2px 6px rgba(0,0,0,0.2)"></div>
<svg style="left:0;top:0" width="1600" height="788">
<path d="M1573.2 713.3 l2.5 5.1 l5.6 0.8 l-4.05 3.95 l0.95 5.6 l-5 -2.65 l-5 2.65 l0.95 -5.6 l-4.05 -3.95 l5.6 -0.8z" fill="#ecebea" stroke="#ecebea" stroke-width="1.2" stroke-linejoin="round"/>
<circle cx="1573.2" cy="757" r="4.5" fill="none" stroke="#e6e9f0" stroke-width="1.3"/>
<path d="M1567 757 a6.2 6.2 0 0 1 12.4 0" fill="none" stroke="#e6e9f0" stroke-width="1.3"/>
<path d="M1565.8 769 c0 -3.5 3.3 -5.5 7.4 -5.5 s7.4 2 7.4 5.5 z" fill="#e6e9f0"/>
</svg>
<div class="r" style="left:1595.00px;top:55.00px;width:5.00px;height:427.00px;background:#8f949b;border-radius:3px;"></div>
<div class="r" style="left:706.40px;top:58.40px;width:151.60px;height:83.60px;background:#d3d3d3;border-radius:9px;box-shadow:0 4px 14px rgba(0,0,0,0.12);"></div>
<div class="r" style="left:706.40px;top:101.70px;width:151.60px;height:34.30px;background:#ffffff;border-radius:0px;"></div>
<span id="t71" class="t" style="left:724.50px;top:76.01px;font-size:12.00px;color:#1b1d22;font-weight:400;letter-spacing:0.006px;">Thuế &amp; Kế toán</span>
<span id="t72" class="t" style="left:723.20px;top:112.61px;font-size:12.19px;color:#1b1d22;font-weight:400;letter-spacing:0.022px;">Hóa đơn điện tử</span>
</div></body></html>
